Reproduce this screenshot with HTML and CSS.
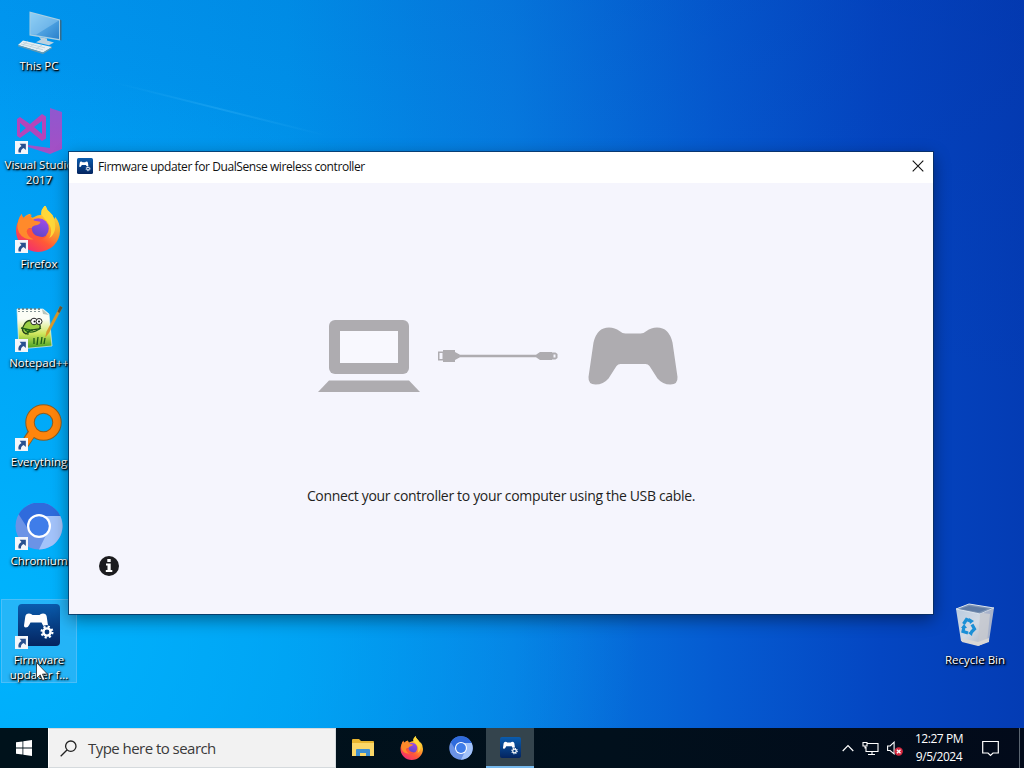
FILE: index.html
```html
<!DOCTYPE html>
<html lang="en">
<head>
    <meta charset="UTF-8">
    <meta name="viewport" content="width=device-width, initial-scale=1.0">
    <title>Desktop</title>
    <link rel="stylesheet" href="styles.css">
</head>
<body>
    <!-- Shared icons -->
    <svg class="sprite" width="0" height="0">
        <defs>
            <linearGradient id="fwBg" x1="0" y1="0" x2="0" y2="1">
                <stop offset="0" stop-color="#0a5cae"/>
                <stop offset="1" stop-color="#04245f"/>
            </linearGradient>
            <linearGradient id="foxBody" x1="0.85" y1="0" x2="0.2" y2="1">
                <stop offset="0" stop-color="#fff04a"/>
                <stop offset="0.35" stop-color="#ffb02b"/>
                <stop offset="0.65" stop-color="#ff5a36"/>
                <stop offset="1" stop-color="#f0267a"/>
            </linearGradient>
            <linearGradient id="foxGlobe" x1="0.7" y1="0" x2="0.3" y2="1">
                <stop offset="0" stop-color="#a04be8"/>
                <stop offset="1" stop-color="#5646c4"/>
            </linearGradient>
            <linearGradient id="pcScreen" x1="0" y1="0" x2="1" y2="1">
                <stop offset="0" stop-color="#7cc6f3"/>
                <stop offset="0.5" stop-color="#52a6e4"/>
                <stop offset="1" stop-color="#2a80cb"/>
            </linearGradient>
            <linearGradient id="vsBar" x1="0" y1="0" x2="0" y2="1">
                <stop offset="0" stop-color="#8f58cf"/>
                <stop offset="1" stop-color="#a54fc4"/>
            </linearGradient>
            <linearGradient id="nppPage" x1="0" y1="0" x2="0" y2="1">
                <stop offset="0.25" stop-color="#fbfdf6"/>
                <stop offset="0.62" stop-color="#cfe75c"/>
                <stop offset="1" stop-color="#3f9c1f"/>
            </linearGradient>
            <linearGradient id="binBody" x1="0" y1="0" x2="1" y2="1">
                <stop offset="0" stop-color="#b9cbe0"/>
                <stop offset="0.5" stop-color="#d3dae4"/>
                <stop offset="1" stop-color="#a9b0bd"/>
            </linearGradient>
        </defs>

        <symbol id="icon-firmware" viewBox="0 0 42 42">
            <rect width="42" height="42" rx="4" fill="url(#fwBg)"/>
            <path d="M11 9.500q2.500 0 3.500 1.500h7q1-1.500 3.500-1.500q3.200 0 3.700 3l1.300 9q.2 2-1.800 2q-2.200 0-3.400-2.500l-1.300-2.500h-11l-1.300 2.500q-1.200 2.500-3.400 2.500q-2 0-1.800-2l1.300-9q.5-3 3.700-3z" fill="#fff"/>
            <circle cx="29" cy="28" r="7" fill="#063a7e"/>
            <circle cx="29" cy="28" r="3.600" fill="none" stroke="#fff" stroke-width="2.400"/>
            <circle cx="29" cy="28" r="5.400" fill="none" stroke="#fff" stroke-width="2.200" stroke-dasharray="2.120 2.120"/>
        </symbol>

        <symbol id="icon-firefox" viewBox="0 0 48 48">
            <path d="M3 17Q4 12 7 9q0 3 2 4 2-3 7-4-1 3 2 4 5-3 9-3-1-5 4-10 1 5 5 8 3 2 4 6 1 0 1-2 5 6 5 14a22.500 22 0 0 1-45 0Q1 21 3 17z" fill="url(#foxBody)"/>
            <path d="M27 10q-1-5 4-10 1 5 5 8 5 5 5 12 1 9-6 14 5-10-3-18z" fill="#ffd83a"/>
            <circle cx="24" cy="24" r="10.500" fill="url(#foxGlobe)"/>
            <path d="M6 11q0 3 3 3 3-4 8-4-2 4 3 6l6 1q0 3-6 4-3 1-3 3-4-1-5 3 1 6 7 8-10 1-15-7-4-8 2-17z" fill="#ff8a2b"/>
            <path d="M17 24q-4-1-5 3 3 8 12 8 6 0 9-4-4 3-9 1-6-1-7-8z" fill="#ff5538"/>
        </symbol>

        <symbol id="icon-chromium" viewBox="0 0 48 48">
            <circle cx="24" cy="24" r="23.500" fill="#6b93e6"/>
            <path d="M24 14h21.300A23.500 23.500 0 0 1 24 47.500L33 29z" fill="#a3c3fa"/>
            <path d="M24 14h21.300A23.500 23.500 0 0 0 3.600 12.300L15 30A10 10 0 0 1 24 14z" fill="#2f6bdc"/>
            <circle cx="24" cy="24" r="12" fill="#fff"/>
            <circle cx="24" cy="24" r="9.800" fill="#3f7de9"/>
        </symbol>

        <symbol id="shortcut" viewBox="0 0 12 12">
            <rect width="12" height="12" fill="#f4f6fa"/>
            <path d="M3.300 10.500q-1-4 2.700-6L4.300 2.500H10v5.700L8 6.500q-2.700 1-2.500 4z" fill="#29508f"/>
        </symbol>
    </svg>

    <div class="desktop">
        <div class="rays"></div>

        <div class="icons">
            <div class="shortcut">
                <svg class="shortcut-icon" viewBox="0 0 48 48">
                    <path d="M14.500 3.500l30.500 8v21l-30.500-5z" fill="#a9cfe4"/>
                    <path d="M15.500 5l28.500 7.500v18.500l-28.500-4.800z" fill="url(#pcScreen)"/>
                    <path d="M15.500 5l28.500 7.500-23 14.300-5.500-.9z" fill="#b4e0fa" opacity=".35"/>
                    <path d="M45 11.500l1.500 1v20L45 32z" fill="#356b8b"/>
                    <path d="M24 29l8 1.500v2l7 2-5 2.800-13-3 5-2.800z" fill="#bcd2df"/>
                    <path d="M8 32.500L37 39l-9 5.500L3 37z" fill="#e6eff3"/>
                    <path d="M3 37l25 7.500 9-5.500v1.300l-9 5.700L3 38.300z" fill="#6799ae"/>
                    <path d="M8 34.500l22 5.300M6 36l22 5.800M13 33l-5 4M20 35l-5 4M27 37l-6 4" stroke="#b5cbd6" stroke-width=".7"/>
                </svg>
                <span class="label">This PC</span>
            </div>
            <div class="shortcut">
                <svg class="shortcut-icon" viewBox="0 0 48 48">
                    <path d="M35 1l12 4v37l-12 5-22-7v-2l22 3z" fill="url(#vsBar)"/>
                    <path d="M27 7l4 2.500v22L27 34 15 24 5 31l-3-2v-17l3-2 10 7zM5 16v10l6-5zM27 14l-8 6 8 7z" fill="#b445bb" fill-rule="evenodd"/>
                    <use href="#shortcut" x="0" y="34" width="13" height="13"/>
                </svg>
                <span class="label">Visual Studio<br>2017</span>
            </div>
            <div class="shortcut">
                <svg class="shortcut-icon" viewBox="0 0 48 48">
                    <use href="#icon-firefox" x="0" y="-1" width="47" height="47"/>
                    <use href="#shortcut" x="0" y="34" width="13" height="13"/>
                </svg>
                <span class="label">Firefox</span>
            </div>
            <div class="shortcut">
                <svg class="shortcut-icon" viewBox="0 0 48 48">
                    <path d="M2 4h26l6 5 3 32-33 3z" fill="url(#nppPage)" stroke="#e8efe8" stroke-width=".7"/>
                    <path d="M27 4l7 6-6-1z" fill="#b6c4bd"/>
                    <path d="M4 3v4M8 3v4M12 3v4M16 3v4M20 3v4M24 3v4" stroke="#5b7076" stroke-width="1.500" stroke-dasharray="2 1"/>
                    <path d="M9 20q3-6 9-4l5 2q4 3 1 6l-8 1-5 4q-6-3-2-9z" fill="#9bcf45" stroke="#26431a" stroke-width="1.300"/>
                    <circle cx="19" cy="16.500" r="3.300" fill="#fff" stroke="#222" stroke-width="1"/>
                    <circle cx="24" cy="16.500" r="3" fill="#fff" stroke="#222" stroke-width="1"/>
                    <path d="M10 25q6 5 16-2M6 23l9 2M13 30q-1-5 5-5M19 39v-6M22 40l1-8M26 39l1-7M29 39l1-6" fill="none" stroke="#1e5d17" stroke-width="1.300"/>
                    <circle cx="19.500" cy="16.500" r="1" fill="#111"/>
                    <circle cx="24" cy="16.500" r="1" fill="#111"/>
                    <path d="M45 1l2.500 1.500L34 28l-4 5 1.500-6.500z" fill="#d8992c"/>
                    <path d="M45 1l2.500 1.500-3 5.500-2-1.300z" fill="#6b5a39"/>
                    <use href="#shortcut" x="0" y="34" width="13" height="13"/>
                </svg>
                <span class="label">Notepad++</span>
            </div>
            <div class="shortcut">
                <svg class="shortcut-icon" viewBox="0 0 48 48">
                    <g fill="none">
                        <path d="M17 29L9 41" stroke="#8b5d22" stroke-width="9"/>
                        <circle cx="28.500" cy="18.500" r="13.500" stroke="#8b5d22" stroke-width="9.500"/>
                        <path d="M18 28L9.500 40.500" stroke="#ff850c" stroke-width="7"/>
                        <circle cx="28.500" cy="18.500" r="13.500" stroke="#ff850c" stroke-width="7.500"/>
                    </g>
                    <use href="#shortcut" x="0" y="34" width="13" height="13"/>
                </svg>
                <span class="label">Everything</span>
            </div>
            <div class="shortcut">
                <svg class="shortcut-icon" viewBox="0 0 48 48">
                    <use href="#icon-chromium" y="-1" width="48" height="48"/>
                    <use href="#shortcut" x="0" y="34" width="13" height="13"/>
                </svg>
                <span class="label">Chromium</span>
            </div>
            <div class="shortcut selected">
                <svg class="shortcut-icon" viewBox="0 0 48 48">
                    <use href="#icon-firmware" x="3" y="2" width="42" height="42"/>
                    <use href="#shortcut" x="0" y="34" width="13" height="13"/>
                </svg>
                <span class="label">Firmware<br>updater f...</span>
            </div>
        </div>

        <div class="icons icons-right">
            <div class="shortcut">
                <svg class="shortcut-icon" viewBox="0 0 48 48">
                    <path d="M5 7l34 5-3 28-8 3.500L10 39z" fill="url(#binBody)"/>
                    <path d="M5 7l13-5 25 4-14 6z" fill="#7e94b3" stroke="#dbe4ee" stroke-width="1"/>
                    <path d="M9 7l9-3 19 2.800-9 3.400z" fill="#5f7ba4"/>
                    <path d="M29 12l14-6-5 33-11 5z" fill="#c5c8cf" opacity=".85"/>
                    <path d="M10 36l17 4 11-4v4l-11 4-16-4z" fill="#d9d7d5"/>
                    <g fill="none" stroke="#1b8fd6" stroke-width="3.200">
                        <path d="M12.500 22l3-4.500 4 1.500"/>
                        <path d="M21 22.500l2.500 4.500-3.500 3.500"/>
                        <path d="M17 31l-5-1.500 1-4.500"/>
                    </g>
                    <path d="M18 16l5 3-4 3zM22 28l-5 3 4 3zM10 26l3-4 3 4z" fill="#1b8fd6"/>
                </svg>
                <span class="label">Recycle Bin</span>
            </div>
        </div>

        <!-- Updater window -->
        <div class="window">
            <div class="titlebar">
                <svg class="title-icon" viewBox="0 0 42 42"><use href="#icon-firmware"/></svg>
                <span class="title">Firmware updater for DualSense wireless controller</span>
                <svg class="close" viewBox="0 0 12 12"><path d="M.7.700l10.600 10.600M11.300.700L.7 11.300" stroke="#111" stroke-width="1.100"/></svg>
            </div>
            <div class="content">
                <div class="devices">
                    <svg width="102" height="72" viewBox="0 0 102 72">
                        <path d="M17 0h68a6 6 0 0 1 6 6v42a6 6 0 0 1-6 6H17a6 6 0 0 1-6-6V6a6 6 0 0 1 6-6z" fill="#aeacb0"/>
                        <path d="M22 11h58v32H22z" fill="#f8f8fe"/>
                        <path d="M11 60.500h80L102 72H0z" fill="#aeacb0"/>
                    </svg>
                    <svg class="cable" width="122" height="14" viewBox="0 0 122 14">
                        <path d="M1 2.500h5V1h12v2l5 2.700h76l4-2.700h12v.5h3.500l2 1.500v4l-2 1.500H115v.5h-12l-4-2.700H23L18 11v2H6v-1.500H1zM2.500 4v6H5.500V4zM116.500 5.500v3h2v-3z" fill="#aeacb0" fill-rule="evenodd"/>
                    </svg>
                    <svg width="90" height="58" viewBox="0 0 90 58">
                        <path d="M21 .500q6 0 10.500 3.500 3 2.500 6 2.500h15q3 0 6-2.500Q63 .500 69 .500q12 0 15.500 15L89.500 50q.5 7.500-7 7.500-8 0-13-6l-8-12.500q-1.500-2-4-2h-25q-2.500 0-4 2l-8 12.500q-5 6-13 6-7.500 0-7-7.500l5-34.500q3.500-15 15.500-15z" fill="#aeacb0"/>
                    </svg>
                </div>
                <p class="message">Connect your controller to your computer using the USB cable.</p>
                <svg class="info" viewBox="0 0 20 20">
                    <circle cx="10" cy="10" r="10" fill="#1c1c1f"/>
                    <path d="M8.300 3h3.400v3H8.300zM7 7.500h4.700v6.500H13.300v2H6.800v-2h1.700V9.500H7z" fill="#fff"/>
                </svg>
            </div>
        </div>

        <svg class="cursor" viewBox="0 0 12 19">
            <path d="M.5.500v16l3.700-3.600 2.400 5.600 2.300-1-2.400-5.400h5z" fill="#fff" stroke="#222" stroke-width=".8"/>
        </svg>
    </div>

    <div class="taskbar">
        <div class="start">
            <svg width="16" height="16" viewBox="0 0 16 16">
                <path d="M0 2.300L6.500 1.400v6.200H0zM7.300 1.300L16 0v7.600H7.300zM0 8.400h6.500v6.200L0 13.700zM7.300 8.400H16V16l-8.700-1.300z" fill="#fff"/>
            </svg>
        </div>
        <div class="search">
            <svg width="17" height="17" viewBox="0 0 17 17">
                <circle cx="10.800" cy="6.200" r="5.200" fill="none" stroke="#222" stroke-width="1.300"/>
                <path d="M7 10L.7 16.300" stroke="#222" stroke-width="1.300"/>
            </svg>
            <span class="search-text">Type here to search</span>
        </div>
        <div class="apps">
            <div class="app">
                <svg width="22" height="20" viewBox="0 0 22 20">
                    <path d="M0 2q0-1 1-1h6l2 2h12q1 0 1 1v14H0z" fill="#e8b530"/>
                    <path d="M0 5h22v13H0z" fill="#fbd768"/>
                    <path d="M4 18v-6q0-1 1-1h12q1 0 1 1v6h-4v-3H8v3z" fill="#3d8fd2"/>
                </svg>
            </div>
            <div class="app"><svg width="24" height="24"><use href="#icon-firefox"/></svg></div>
            <div class="app"><svg width="24" height="24"><use href="#icon-chromium"/></svg></div>
            <div class="app active"><svg width="21" height="21"><use href="#icon-firmware"/></svg></div>
        </div>
        <div class="tray">
            <svg width="12" height="8" viewBox="0 0 12 8"><path d="M.7 7L6 1.500 11.300 7" fill="none" stroke="#fff" stroke-width="1.200"/></svg>
            <svg width="17" height="15" viewBox="0 0 17 15">
                <path d="M5 2.500h11v8H4V6M10 10.500v3M6 13.500h7M1 1.500h4V5H1zM3 5v2.500" fill="none" stroke="#fff" stroke-width="1.100"/>
            </svg>
            <svg width="16" height="15" viewBox="0 0 16 15">
                <path d="M.6 5h2.500l4-3.800v11.600L3.100 9.500H.6z" fill="none" stroke="#fff" stroke-width="1.100"/>
                <circle cx="11.700" cy="10.500" r="4.200" fill="#d4283f"/>
                <path d="M9.900 8.700l3.600 3.600M13.500 8.700l-3.600 3.600" stroke="#fff" stroke-width="1.300"/>
            </svg>
        </div>
        <div class="clock">
            <span>12:27 PM</span>
            <span>9/5/2024</span>
        </div>
        <div class="notifications">
            <svg width="17" height="17" viewBox="0 0 17 17"><path d="M.7 1.500h15.600v11.500h-5.300l-2.500 2.500L6 13H.7z" fill="none" stroke="#fff" stroke-width="1.200"/></svg>
        </div>
    </div>
</body>
</html>
```

FILE: styles.css
```css
* {
    box-sizing: border-box;
}
body {
    margin: 0;
    width: 1024px;
    height: 768px;
    overflow: hidden;
    display: flex;
    flex-direction: column;
    font-family: "Open Sans", "Noto Sans", sans-serif;
    font-size: 12px;
}
.sprite {
    position: absolute;
}

/* Desktop */
.desktop {
    position: relative;
    height: 728px;
    padding: 5px 11px 0 1px;
    display: flex;
    justify-content: space-between;
    overflow: hidden;
    background:
        radial-gradient(ellipse 640px 560px at 0% 85%, rgba(0, 184, 255, 0.85), rgba(0, 184, 255, 0) 100%),
        linear-gradient(90deg, #009af2 0%, #0093eb 28%, #067ce1 50%, #055bd1 70%, #0446c2 86%, #043cb4 100%);
}
.rays {
    position: absolute;
    inset: 0;
    background: linear-gradient(194deg, rgba(0, 40, 150, 0.14) 0%, rgba(0, 40, 150, 0) 40%);
}
/* faint light beam above the window */
.rays::after {
    content: "";
    position: absolute;
    left: 110px;
    top: 108px;
    width: 220px;
    height: 2px;
    transform: rotate(14deg);
    background: linear-gradient(90deg, rgba(90, 200, 255, 0), rgba(90, 200, 255, 0.22), rgba(90, 200, 255, 0));
}
.icons {
    position: relative;
    display: flex;
    flex-direction: column;
    gap: 15px;
}
.icons-right {
    justify-content: flex-end;
    padding-bottom: 45px;
}
.shortcut {
    width: 76px;
    height: 84px;
    padding-top: 3px;
    display: flex;
    flex-direction: column;
    align-items: center;
}
.selected {
    background: rgba(120, 190, 240, 0.3);
    outline: 1px solid rgba(150, 210, 250, 0.35);
    outline-offset: -1px;
}
.shortcut-icon {
    width: 48px;
    height: 48px;
    flex: none;
}
.label {
    margin-top: 2px;
    color: #fff;
    font-size: 11.5px;
    line-height: 15px;
    text-align: center;
    white-space: nowrap;
    text-shadow: 1px 1px 1px #000, 1px 1px 2px #000, 0 1px 3px rgba(0, 0, 0, 0.8);
}
.cursor {
    position: absolute;
    left: 36px;
    top: 662px;
    width: 12px;
    height: 19px;
}

/* Window */
.window {
    position: absolute;
    left: 69px;
    top: 152px;
    width: 864px;
    height: 462px;
    display: flex;
    flex-direction: column;
    background: #f5f5fd;
    box-shadow: 0 0 0 1px rgba(10, 45, 90, 0.75), 0 5px 16px rgba(0, 0, 0, 0.45);
}
.titlebar {
    height: 31px;
    padding: 0 9px 2px 8px;
    display: flex;
    align-items: center;
    background: #fff;
}
.title-icon {
    width: 16px;
    height: 16px;
    margin: 0 5px 2px 0;
}
.title {
    flex: 1;
    font-size: 12px;
    letter-spacing: -0.42px;
    color: #111;
}
.close {
    width: 12px;
    height: 12px;
    margin-bottom: 2px;
}
.content {
    flex: 1;
    padding: 137px 30px 38px;
    display: flex;
    flex-direction: column;
}
.devices {
    display: flex;
    align-items: center;
    width: 360px;
    margin-left: 219px;
}
.cable {
    margin: 0 29px 0 17px;
}
.message {
    margin: 93px 0 0;
    font-size: 14px;
    line-height: 22px;
    letter-spacing: -0.33px;
    text-align: center;
    color: #1f1f22;
}
.info {
    width: 20px;
    height: 20px;
    margin-top: auto;
}

/* Taskbar */
.taskbar {
    height: 40px;
    display: flex;
    background: linear-gradient(90deg, #00121b, #01101c 60%, #020a1a);
    color: #fff;
}
.start {
    width: 48px;
    display: flex;
    align-items: center;
    justify-content: center;
}
.search {
    width: 288px;
    padding-left: 11px;
    display: flex;
    align-items: center;
    gap: 11px;
    background: #f2f2f2;
    border: 1px solid #d5dadd;
    border-left-color: #fff;
}
.search-text {
    font-size: 15px;
    letter-spacing: -0.54px;
    color: #3a3a3a;
}
.apps {
    display: flex;
    gap: 1px;
    padding-left: 3px;
}
.app {
    width: 48px;
    display: flex;
    align-items: center;
    justify-content: center;
}
.active {
    background: #34444d;
    border-bottom: 2px solid #76b9ed;
}
.tray {
    margin-left: auto;
    display: flex;
    align-items: center;
    gap: 8px;
}
.clock {
    width: 72px;
    display: flex;
    flex-direction: column;
    align-items: center;
    justify-content: center;
    line-height: 18px;
    letter-spacing: -0.45px;
}
.notifications {
    width: 45px;
    margin-right: 4px;
    padding-right: 20px;
    display: flex;
    align-items: center;
    justify-content: flex-end;
    border-right: 1px solid #5b6571;
}
```
